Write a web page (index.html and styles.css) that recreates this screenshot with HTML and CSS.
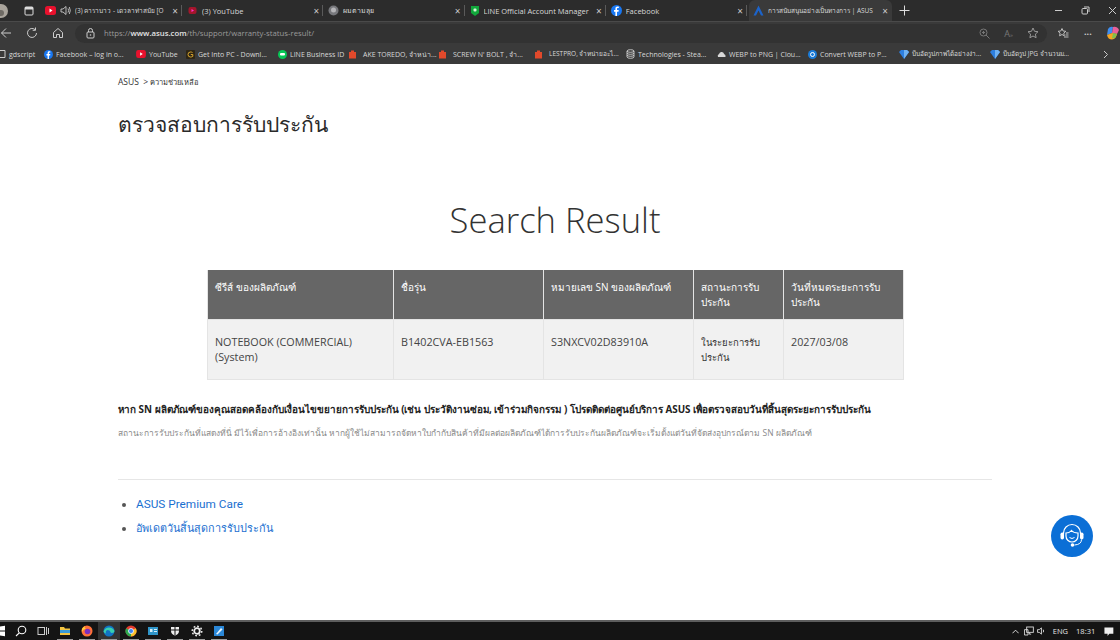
FILE: index.html
```html
<!DOCTYPE html>
<html lang="th">
<head>
  <meta charset="UTF-8" />
  <title>ตรวจสอบการรับประกัน - ASUS</title>
  <link rel="stylesheet" href="styles.css">
</head>
<body>

  <div class="tabbar">
    <div class="tab-lead">
      <svg class="profile" width="10" height="16" viewBox="0 0 10 16"><circle cx="2" cy="8" r="7" fill="#a9a49c"/><circle cx="2" cy="10" r="3" fill="#6e6a64"/></svg>
      <svg class="tab-actions" width="10" height="10" viewBox="0 0 10 10"><rect x="1" y="1" width="8" height="8" rx="1" fill="none" stroke="#ddd" stroke-width="1"/><rect x="1" y="1" width="8" height="2.5" fill="#ddd"/></svg>
    </div>
    <div class="tab tab-first">
      <svg class="fav" width="11" height="9" viewBox="0 0 11 9"><rect width="11" height="9" rx="2.5" fill="#e8112d"/><path d="M4.5 2.5v4l3-2z" fill="#fff"/></svg>
      <svg class="speaker" width="11" height="11" viewBox="0 0 11 11"><path d="M1 4h2l3-2.5v8L3 7H1z M8 3.5q1.4 2 0 4 M9.3 2q2 3.500 0 7" fill="none" stroke="#ddd" stroke-width="0.8"/></svg>
      <span class="tab-title tab-tiny">(3) คาราบาว - เดวลาท่าสมัย [O</span>
      <span class="tab-x">×</span>
    </div>
    <div class="tab">
      <svg class="fav" width="11" height="9" viewBox="0 0 11 9"><rect x="1.500" y="1" width="8" height="7" rx="2" fill="#a3162b"/><path d="M4.500 3v3l2.500-1.500z" fill="#f3c"/></svg>
      <span class="tab-title">(3) YouTube</span>
      <span class="tab-x">×</span>
    </div>
    <div class="tab">
      <svg class="fav" width="11" height="11" viewBox="0 0 11 11"><circle cx="5.500" cy="5.500" r="5" fill="#77787c"/><circle cx="5.500" cy="5" r="2.500" fill="#b5b5b8"/></svg>
      <span class="tab-title tab-small">ผมตามลุย</span>
      <span class="tab-x">×</span>
    </div>
    <div class="tab">
      <svg class="fav" width="10" height="12" viewBox="0 0 10 12"><path d="M1 1h8v7l-4 3-4-3z" fill="#12a83c"/><rect x="3.500" y="3.500" width="3" height="3" rx="1" fill="#d6f5d6"/></svg>
      <span class="tab-title">LINE Official Account Manager</span>
      <span class="tab-x">×</span>
    </div>
    <div class="tab">
      <svg class="fav" width="11" height="11" viewBox="0 0 11 11"><circle cx="5.500" cy="5.500" r="5.500" fill="#1877f2"/><path d="M6 11V6.700h1.500l.2-1.700H6V4c0-.6.2-.9.900-.9h.9V1.700C7.500 1.600 7 1.600 6.600 1.600 5.200 1.600 4.400 2.400 4.400 3.800V5H3v1.700h1.400V11z" fill="#fff"/></svg>
      <span class="tab-title">Facebook</span>
      <span class="tab-x">×</span>
    </div>
    <div class="tab tab-active">
      <svg class="fav" width="11" height="11" viewBox="0 0 11 11"><path d="M5.500 .5 10.500 10.500H8L5.500 5.500 3 10.500H.5z" fill="#1c63c9"/></svg>
      <span class="tab-title tab-tiny">การสนับสนุนอย่างเป็นทางการ | ASUS</span>
      <span class="tab-x">×</span>
    </div>
    <svg class="new-tab" width="11" height="11" viewBox="0 0 11 11"><path d="M5.500 .5v10M.5 5.500h10" stroke="#ddd" stroke-width="1"/></svg>
    <div class="win-controls">
      <svg width="9" height="9" viewBox="0 0 9 9"><path d="M1 4.500h7" stroke="#ccc"/></svg>
      <svg width="9" height="9" viewBox="0 0 9 9"><rect x="1" y="2.500" width="5.500" height="5.500" rx="1" fill="none" stroke="#ccc"/><path d="M3 1h5v5" fill="none" stroke="#ccc"/></svg>
      <svg width="9" height="9" viewBox="0 0 9 9"><path d="M1 1l7 7M8 1l-7 7" stroke="#ccc"/></svg>
    </div>
  </div>

  <div class="toolbar">
    <svg class="tool-icon" width="12" height="12" viewBox="0 0 12 12"><path d="M11 6H1.500M6 1.500 1.500 6 6 10.500" fill="none" stroke="#ccc"/></svg>
    <svg class="tool-icon" width="12" height="12" viewBox="0 0 12 12"><path d="M10.500 6A4.500 4.500 0 1 1 9 2.600M9.500 .5v2.800H6.700" fill="none" stroke="#ccc"/></svg>
    <svg class="tool-icon" width="12" height="12" viewBox="0 0 12 12"><path d="M1.500 5.500 6 1.500l4.500 4v5h-3V7.500h-3v3h-3z" fill="none" stroke="#ccc"/></svg>
    <div class="address">
      <svg class="lock" width="9" height="11" viewBox="0 0 9 11"><rect x="1" y="4" width="7" height="6" rx="1" fill="none" stroke="#ccc"/><path d="M2.500 4V2.500a2 2 0 0 1 4 0V4" fill="none" stroke="#ccc"/><circle cx="4.500" cy="7" r=".8" fill="#ccc"/></svg>
      <span class="url">https://<b>www.asus.com</b>/th/support/warranty-status-result/</span>
      <div class="address-icons">
        <svg width="11" height="11" viewBox="0 0 11 11"><circle cx="4.500" cy="4.500" r="3.500" fill="none" stroke="#777"/><path d="M7 7l3.500 3.500M3 4.500h3M4.500 3v3" stroke="#777"/></svg>
        <span class="read-aloud">A<small>»</small></span>
        <svg width="12" height="12" viewBox="0 0 12 12"><path d="M6 1l1.500 3.300 3.500.4-2.600 2.400.7 3.600L6 9l-3.100 1.700.7-3.600L1 4.700l3.500-.4z" fill="none" stroke="#999"/></svg>
      </div>
    </div>
    <svg class="tool-icon fav-list" width="12" height="12" viewBox="0 0 12 12"><path d="M5 1.500l1.100 2.500 2.700.3-2 1.800.5 2.700L5 7.500 2.600 8.800l.5-2.700-2-1.800 2.700-.3zM9 6h2.500M8.500 8h3M7 10h4.500" fill="none" stroke="#ccc" stroke-width=".9"/></svg>
    <span class="more">···</span>
    <svg class="copilot" width="14" height="14" viewBox="0 0 14 14"><path d="M2 3q2-3 5-2l-1 6-5 2z" fill="#3f8ef0"/><path d="M7 1q4-1 6 3l-2 4-5-1z" fill="#e8609a"/><path d="M1 9l5-2 5 1q-1 5-5 5.500-4 0-5-4.500z" fill="#f5a623"/><path d="M7 7l4 1-2 4-3 .5z" fill="#7fc04c"/></svg>
  </div>

  <div class="bookmarks">
    <div class="bm"><svg width="6" height="8" viewBox="0 0 6 8"><path d="M-1 .5h6v7h-6" fill="none" stroke="#ccc"/></svg><span>gdscript</span></div>
    <div class="bm"><svg width="9" height="9" viewBox="0 0 11 11"><circle cx="5.500" cy="5.500" r="5.500" fill="#1877f2"/><path d="M6 11V6.700h1.500l.2-1.700H6V4c0-.6.2-.9.900-.9h.9V1.700C7 1.600 4.400 1 4.400 3.800V5H3v1.700h1.400V11z" fill="#fff"/></svg><span>Facebook – log in o...</span></div>
    <div class="bm"><svg width="10" height="8" viewBox="0 0 11 9"><rect width="11" height="9" rx="2.500" fill="#e8112d"/><path d="M4.500 2.500v4l3-2z" fill="#fff"/></svg><span>YouTube</span></div>
    <div class="bm"><svg width="9" height="9" viewBox="0 0 9 9"><rect width="9" height="9" rx="1" fill="#2e2616"/><path d="M6.500 2.500Q5.800 2 4.500 2 2 2 2 4.500T4.500 7Q6 7 6.800 6.300V4.500H4.800" fill="none" stroke="#d9a62e"/></svg><span>Get Into PC - Downl...</span></div>
    <div class="bm"><svg width="9" height="9" viewBox="0 0 9 9"><circle cx="4.500" cy="4.500" r="4.500" fill="#06c755"/><rect x="2" y="3" width="5" height="2.500" rx="1" fill="#fff"/></svg><span>LINE Business ID</span></div>
    <div class="bm bm-wide"><svg class="shop" width="9" height="10" viewBox="0 0 9 10"><path d="M1 3h7v6.500H1zM3 3V1.500h3V3" fill="#e2492b"/></svg><span>AKE TOREDO, จำหน่า...</span></div>
    <div class="bm bm-wide"><svg class="shop" width="9" height="10" viewBox="0 0 9 10"><path d="M1 3h7v6.500H1zM3 3V1.500h3V3" fill="#e2492b"/></svg><span>SCREW N' BOLT , จำ...</span></div>
    <div class="bm bm-wide"><svg class="shop" width="9" height="10" viewBox="0 0 9 10"><path d="M1 3h7v6.500H1zM3 3V1.500h3V3" fill="#e2492b"/></svg><span class="bm-th">LESTPRO, จำหน่ายอะไ...</span></div>
    <div class="bm"><svg width="9" height="10" viewBox="0 0 9 10"><ellipse cx="4.500" cy="2" rx="3.500" ry="1.300" fill="none" stroke="#ddd" stroke-width=".8"/><path d="M1 2v6q0 1.300 3.500 1.300T8 8V2M1 4q0 1.300 3.500 1.300T8 4M1 6q0 1.300 3.500 1.300T8 6" fill="none" stroke="#ddd" stroke-width=".8"/></svg><span>Technologies - Stea...</span></div>
    <div class="bm"><svg width="9" height="7" viewBox="0 0 9 7"><path d="M1 6q-1-2 1-3 1-2.500 3-2t2 2q2 .5 1.500 3z" fill="#d8d8d8"/></svg><span>WEBP to PNG | Clou...</span></div>
    <div class="bm"><svg width="9" height="9" viewBox="0 0 9 9"><circle cx="4.500" cy="4.500" r="4.500" fill="#1a7bd8"/><circle cx="4.500" cy="4.500" r="2" fill="none" stroke="#fff"/></svg><span>Convert WEBP to P...</span></div>
    <div class="bm"><svg width="10" height="9" viewBox="0 0 10 9"><path d="M0 2 2 0h6l2 2-5 7z" fill="#2d7fe0"/><path d="M5 0h3l2 2-5 7z" fill="#6fb1f2"/></svg><span class="bm-th">บีบอัดรูปภาพได้อย่างง่า...</span></div>
    <div class="bm"><svg width="10" height="9" viewBox="0 0 10 9"><path d="M0 2 2 0h6l2 2-5 7z" fill="#2d7fe0"/><path d="M5 0h3l2 2-5 7z" fill="#6fb1f2"/></svg><span class="bm-th">บีบอัดรูป JPG จำนวนม...</span></div>
    <svg class="bm-more" width="6" height="9" viewBox="0 0 6 9"><path d="M1 1l3.500 3.500L1 8" fill="none" stroke="#ccc"/></svg>
  </div>

  <main class="page">
    <div class="breadcrumb">ASUS &nbsp;&gt; <span class="crumb-th">ความช่วยเหลือ</span></div>
    <h1 class="page-title">ตรวจสอบการรับประกัน</h1>
    <h2 class="result-title">Search Result</h2>

    <table class="result-table">
      <thead>
        <tr>
          <th class="col-series">ซีรีส์ ของผลิตภัณฑ์</th>
          <th class="col-model">ชื่อรุ่น</th>
          <th class="col-sn">หมายเลข SN ของผลิตภัณฑ์</th>
          <th class="col-status">สถานะการรับประกัน</th>
          <th class="col-date">วันที่หมดระยะการรับประกัน</th>
        </tr>
      </thead>
      <tbody>
        <tr>
          <td>NOTEBOOK (COMMERCIAL) (System)</td>
          <td>B1402CVA-EB1563</td>
          <td>S3NXCV02D83910A</td>
          <td class="cell-th">ในระยะการรับประกัน</td>
          <td>2027/03/08</td>
        </tr>
      </tbody>
    </table>

    <p class="note-bold">หาก SN ผลิตภัณฑ์ของคุณสอดคล้องกับเงื่อนไขขยายการรับประกัน (เช่น ประวัติงานซ่อม, เข้าร่วมกิจกรรม ) โปรดติดต่อศูนย์บริการ ASUS เพื่อตรวจสอบวันที่สิ้นสุดระยะการรับประกัน</p>
    <p class="note-grey">สถานะการรับประกันที่แสดงที่นี่ มีไว้เพื่อการอ้างอิงเท่านั้น หากผู้ใช้ไม่สามารถจัดหาใบกำกับสินค้าที่มีผลต่อผลิตภัณฑ์ได้การรับประกันผลิตภัณฑ์จะเริ่มตั้งแต่วันที่จัดส่งอุปกรณ์ตาม SN ผลิตภัณฑ์</p>

    <hr class="divider">

    <ul class="links">
      <li><a href="#">ASUS Premium Care</a></li>
      <li><a class="link-th" href="#">อัพเดตวันสิ้นสุดการรับประกัน</a></li>
    </ul>

    <div class="chat-btn">
      <svg width="30" height="30" viewBox="0 0 30 30" fill="none" stroke="#fff" stroke-width="1.200">
        <path d="M6.500 13V12a8.500 8.500 0 0 1 17 0v1"/>
        <rect x="3.500" y="11.500" width="3.500" height="7" rx="1.700" fill="#fff" stroke="none"/>
        <rect x="23" y="11.500" width="3.500" height="7" rx="1.700" fill="#fff" stroke="none"/>
        <path d="M9 12q3.500 0 5.500-2.500 2 2.500 6.500 2.500v3a6 6 0 0 1-12 0z"/>
        <path d="M12.500 16.500q2.500 2 5 0" stroke-width="1"/>
        <path d="M24.500 18.500q0 5-7 5.500" stroke-width="1"/>
        <circle cx="15.500" cy="24" r="1.800" fill="#fff" stroke="none"/>
      </svg>
    </div>
  </main>

  <footer class="taskbar">
    <svg class="task-win" width="6" height="12" viewBox="0 0 6 12"><path d="M0 1.500l5-.8V5.500H0zM0 6.500h5v4.800l-5-.8z" fill="#fff"/></svg>
    <span class="task"><svg width="12" height="12" viewBox="0 0 12 12"><circle cx="7" cy="5" r="3.800" fill="none" stroke="#fff" stroke-width="1.100"/><path d="M4.300 7.800 1 11" stroke="#fff" stroke-width="1.100"/></svg></span>
    <span class="task"><svg width="12" height="12" viewBox="0 0 12 12"><rect x="1" y="2.500" width="6.500" height="7" fill="none" stroke="#ccc"/><path d="M9.500 2v8M11.500 3v6" stroke="#ccc"/></svg></span>
    <span class="task task-open"><svg width="12" height="12" viewBox="0 0 12 12"><path d="M1 2h4l1 1.500h5V10H1z" fill="#f4c542"/><rect x="1" y="5" width="10" height="3" fill="#3a9bd8"/></svg></span>
    <span class="task task-open"><svg width="12" height="12" viewBox="0 0 12 12"><circle cx="6" cy="6" r="5.500" fill="#ff7139"/><circle cx="6.500" cy="6.500" r="2.800" fill="#7a2fc0"/><path d="M1 7q-1-4 3-6-1 2 1 2.500Q2 4 1 7z" fill="#ffcf3c"/></svg></span>
    <span class="task task-open task-active"><svg width="12" height="12" viewBox="0 0 12 12"><circle cx="6" cy="6" r="5.500" fill="#1173c4"/><path d="M.5 6.500Q2 2.500 6 2.500t5.500 3.500q0 2-2.500 2-1.500 0-1.500-1Q7 5 4.500 5 2 5.500 3 8.500 1 8 .5 6.500z" fill="#39d0b0"/></svg></span>
    <span class="task task-open"><svg width="12" height="12" viewBox="0 0 12 12"><circle cx="6" cy="6" r="5.500" fill="#e33b2e"/><path d="M6 6 1.200 3.200A5.500 5.500 0 0 0 6 11.500z" fill="#2da94f"/><path d="M6 6v5.500A5.500 5.500 0 0 0 10.800 3.200z" fill="#fbc02d"/><circle cx="6" cy="6" r="2.500" fill="#3e82f1" stroke="#fff" stroke-width=".8"/></svg></span>
    <span class="task task-open"><svg width="12" height="12" viewBox="0 0 12 12"><rect x="1" y="2" width="10" height="8" fill="#2f95c9"/><rect x="3" y="4" width="2.500" height="3" fill="#d5eef8"/><path d="M7 4.500h3M7 6.500h3" stroke="#d5eef8"/></svg></span>
    <span class="task task-open"><svg width="12" height="12" viewBox="0 0 12 12"><path d="M2 2h8v4q0 3-4 4.500Q2 9 2 6z" fill="#eee"/><path d="M2 5h8" stroke="#111"/><path d="M6 2v8" stroke="#111"/></svg></span>
    <span class="task task-open"><svg width="12" height="12" viewBox="0 0 12 12"><circle cx="6" cy="6" r="2.800" fill="none" stroke="#eee" stroke-width="1.800"/><circle cx="6" cy="6" r="4.800" fill="none" stroke="#eee" stroke-width="1.400" stroke-dasharray="1.800 1.900"/></svg></span>
    <span class="task task-open"><svg width="12" height="12" viewBox="0 0 12 12"><rect x="1" y="1" width="10" height="10" fill="#2b88d8"/><path d="M3 9l5-6 1.500 1.500-5 5z" fill="#e8f4fc"/></svg></span>
    <div class="tray">
      <svg width="8" height="5" viewBox="0 0 8 5"><path d="M.5 4.500 4 1l3.500 3.500" fill="none" stroke="#eee"/></svg>
      <svg width="11" height="10" viewBox="0 0 11 10"><rect x="3" y=".5" width="7.500" height="6" fill="none" stroke="#ddd"/><path d="M.5 3.500h4v6h-4zM6 6.500v2h2" fill="none" stroke="#ddd"/></svg>
      <svg class="tray-speaker" width="10" height="10" viewBox="0 0 10 10"><path d="M.5 3.500h2L5 1.500v7L2.500 6.500h-2z" fill="none" stroke="#ddd"/><path d="M7 3.500q1 1.500 0 3" fill="none" stroke="#ddd"/></svg>
      <span class="tray-lang">ENG</span>
      <span class="tray-time">18:31</span>
      <svg class="tray-note" width="11" height="11" viewBox="0 0 11 11"><path d="M.5 1h10v7H6l-2 2.500V8H.5z" fill="#eee"/></svg>
    </div>
  </footer>

</body>
</html>
```

FILE: styles.css
```css
:root {
  --tabs: #2c2c2c;
  --chrome: #3a3a3a;
  --chrome-text: #d8d8d8;
  --ui: "Open Sans", "Noto Sans", sans-serif;
}

html, body {
  height: 100%;
}

body {
  margin: 0;
  height: 640px;
  display: flex;
  flex-direction: column;
  overflow: hidden;
  background: #fff;
  font-family: var(--ui), "DejaVu Sans";
}

/* browser tabs */
.tabbar {
  height: 21px;
  flex: none;
  display: flex;
  align-items: stretch;
  background: var(--tabs);
  color: var(--chrome-text);
  font-size: 7.5px;
}

.tab-lead {
  width: 40px;
  flex: none;
  display: flex;
  align-items: center;
}

.profile {
  margin-left: -1px;
}

.tab-actions {
  margin-left: 15px;
}

.tab {
  width: 141.250px;
  flex: none;
  box-sizing: border-box;
  position: relative;
  display: flex;
  align-items: center;
  gap: 4px;
  padding: 0 4px 0 5px;
  white-space: nowrap;
}

.tab::after {
  content: "";
  position: absolute;
  right: 0;
  top: 5px;
  width: 1px;
  height: 11px;
  background: #5a5a5a;
}

.tab-first {
  width: 142px;
}

.tab-title {
  flex: 1;
  overflow: hidden;
  min-width: 0;
}

.tab-small {
  font-size: 7px;
}

.tab-tiny {
  font-size: 6.500px;
}

.tab-x {
  flex: none;
  font-size: 10px;
  color: #ccc;
}

.tab-active {
  width: 143px;
  margin-left: 2px;
  padding-left: 4px;
  background: var(--chrome);
  border-radius: 6px 6px 0 0;
}

.tab-active::after {
  display: none;
}

.new-tab {
  align-self: center;
  margin-left: 7px;
}

.win-controls {
  margin-left: auto;
  width: 63px;
  padding-right: 3px;
  display: flex;
  align-items: center;
  justify-content: space-between;
}

/* address bar */
.toolbar {
  height: 23px;
  flex: none;
  display: flex;
  align-items: center;
  background: var(--chrome);
  border-top: 1px solid #4a4a4a;
  box-sizing: border-box;
  padding-left: 0;
}

.tool-icon {
  margin-left: 14px;
  flex: none;
}

.tool-icon:first-child {
  margin-left: 0;
}

.address {
  width: 972px;
  height: 19px;
  margin-left: 11px;
  flex: none;
  box-sizing: border-box;
  display: flex;
  align-items: center;
  padding: 0 8px 0 11px;
  border-radius: 10px;
  background: #323232;
  color: #9a9a9a;
  font-size: 7.750px;
}

.url {
  margin-left: 9px;
}

.url b {
  font-weight: 600;
  color: #e4e4e4;
}

.address-icons {
  margin-left: auto;
  display: flex;
  align-items: center;
  gap: 14px;
}

.read-aloud {
  color: #777;
  font-size: 9px;
}

.read-aloud small {
  font-size: 6px;
}

.fav-list {
  margin-left: 10px;
}

.more {
  margin-left: 15px;
  color: #ccc;
  font-size: 9px;
  font-weight: 700;
}

.copilot {
  margin-left: 14px;
}

/* favourites bar */
.bookmarks {
  height: 20px;
  flex: none;
  display: grid;
  grid-template-columns: 44px 92px 50px 92px 70px 90px 96px 92px 91px 91px 91px 91px 103px;
  align-items: center;
  background: var(--chrome);
  color: var(--chrome-text);
  font-size: 7px;
  white-space: nowrap;
}

.bm {
  display: flex;
  align-items: center;
  gap: 3px;
  overflow: hidden;
  min-width: 0;
}

.bm svg {
  flex: none;
}

.bm-wide {
  gap: 6px;
}

.bm-th {
  font-size: 6.500px;
}

.bm-more {
  position: absolute;
  left: 1103px;
  top: 50px;
}

/* page content */
.page {
  flex: 1;
  min-height: 0;
  position: relative;
  padding: 12px 128px 0 118px;
  color: #222;
}

.breadcrumb {
  font-size: 8.500px;
  line-height: 12px;
  color: #333;
}

.crumb-th {
  font-size: 7.500px;
}

.page-title {
  margin: 21px 0 0;
  font-size: 21px;
  line-height: 30px;
  font-weight: 400;
  color: #2a2a2a;
}

.result-title {
  margin: 56px 0 0;
  text-align: center;
  font-size: 34.600px;
  line-height: 50px;
  font-weight: 300;
  color: #333;
}

.result-table {
  width: 696px;
  margin: 25px 0 0 89px;
  table-layout: fixed;
  border-collapse: collapse;
  font-size: 10.750px;
  line-height: 15px;
}

.col-series { width: 186px; }
.col-model { width: 150px; }
.col-sn { width: 150px; }
.col-status { width: 90px; }
.col-date { width: 120px; }

.result-table th {
  height: 49px;
  box-sizing: border-box;
  padding: 10px 7px 0;
  background: #666;
  color: #fff;
  font-size: 10px;
  font-weight: 400;
  text-align: left;
  vertical-align: top;
  border: 1px solid #e4e4e4;
  border-width: 0 1px;
}

.result-table td {
  height: 60px;
  box-sizing: border-box;
  padding: 15px 7px 0;
  background: #f1f1f1;
  color: #444;
  vertical-align: top;
  border: 1px solid #e4e4e4;
}

.result-table .cell-th {
  font-size: 9.500px;
  color: #333;
}

.note-bold {
  margin: 22px 0 0;
  font-size: 9.870px;
  line-height: 14px;
  font-weight: 700;
  color: #222;
  white-space: nowrap;
}

.note-grey {
  margin: 10px 0 0;
  font-size: 8.450px;
  line-height: 14px;
  color: #8a8a8a;
  white-space: nowrap;
}

.divider {
  margin: 39px 0 0;
  border: none;
  border-top: 1px solid #e6e6e6;
}

.links {
  margin: 12px 0 0;
  padding-left: 18px;
  font-family: "Roboto", var(--ui), sans-serif;
  font-size: 11.800px;
  line-height: 24.500px;
  color: #555;
}

.links a {
  color: #1a6fd0;
  text-decoration: none;
}

.links .link-th {
  font-size: 10.800px;
}

.chat-btn {
  position: absolute;
  left: 1051px;
  top: 451px;
  width: 42px;
  height: 42px;
  border-radius: 50%;
  background: #0b6fd6;
  display: flex;
  align-items: center;
  justify-content: center;
}

/* windows taskbar */
.taskbar {
  height: 20px;
  flex: none;
  display: flex;
  align-items: center;
  background: #141414;
  border-top: 2px solid #5e5e5e;
  box-sizing: border-box;
  color: #e4e4e4;
  font-size: 7.500px;
}

.task-win {
  margin-right: 4px;
}

.task {
  width: 22px;
  height: 18px;
  flex: none;
  position: relative;
  display: flex;
  align-items: center;
  justify-content: center;
}

.task-open::after {
  content: "";
  position: absolute;
  left: 3px;
  right: 3px;
  bottom: 0;
  height: 1px;
  background: #9a9a9a;
}

.task-active {
  background: #333;
}

.tray {
  margin-left: auto;
  width: 102px;
  padding-right: 6px;
  display: flex;
  align-items: center;
  gap: 5px;
}

.tray-speaker {
  margin-left: -2px;
}

.tray-lang {
  margin-left: 2px;
}

.tray-time {
  margin-left: 3px;
}

.tray-note {
  margin-left: 4px;
}
```
